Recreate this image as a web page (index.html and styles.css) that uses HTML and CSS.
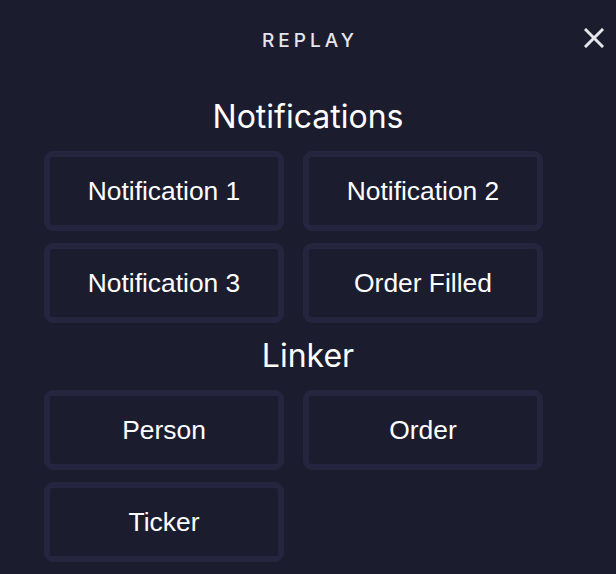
FILE: index.html
```html
<!DOCTYPE html>
<html>
<head>
<meta charset="utf-8">
<link rel="stylesheet" href="styles.css">
</head>
<body>
<div class="panel">
  <header class="topbar">
    <div class="brand">REPLAY</div>
    <button class="close" aria-label="Close">
      <svg width="20" height="20" viewBox="0 0 20 20"><path d="M2 2 L18 18 M18 2 L2 18" stroke="#e6e6ea" stroke-width="3" stroke-linecap="square" fill="none"/></svg>
    </button>
  </header>
  <h2 class="section-title">Notifications</h2>
  <div class="grid">
    <button class="tile">Notification 1</button>
    <button class="tile">Notification 2</button>
    <button class="tile">Notification 3</button>
    <button class="tile">Order Filled</button>
  </div>
  <h2 class="section-title">Linker</h2>
  <div class="grid">
    <button class="tile">Person</button>
    <button class="tile">Order</button>
    <button class="tile">Ticker</button>
  </div>
</div>
</body>
</html>
```
FILE: styles.css
```css
html, body {
  margin: 0;
  padding: 0;
  background: #1c1c2f;
  height: 100%;
  overflow: hidden;
}
.panel {
  display: flex;
  flex-direction: column;
}
.topbar {
  position: relative;
  height: 97px;
  display: flex;
  justify-content: center;
  align-items: flex-start;
}
.brand {
  margin-top: 29px;
  font-family: Inter, "Liberation Sans", sans-serif;
  font-size: 19px;
  font-weight: 500;
  letter-spacing: 4px;
  color: #e6e6ea;
  line-height: 24px;
  padding-left: 4px;
}
.close {
  position: absolute;
  right: 12px;
  top: 28px;
  width: 20px;
  height: 20px;
  padding: 0;
  border: 0;
  background: none;
  cursor: pointer;
}
.close svg { display: block; }
.section-title {
  margin: 0;
  text-align: center;
  font-family: Inter, "Liberation Sans", sans-serif;
  font-weight: 400;
  font-size: 32px;
  line-height: 40px;
  color: #ffffff;
  height: 40px;
}
.section-title + .grid { margin-top: 14px; }
.grid {
  display: grid;
  grid-template-columns: 240px 240px;
  column-gap: 19px;
  row-gap: 12px;
  padding-left: 44px;
  margin-bottom: 13px;
}
.tile {
  height: 80px;
  box-sizing: border-box;
  border: 6px solid #25253f;
  border-radius: 9px;
  background: #1c1c2f;
  color: #ffffff;
  font-family: "Liberation Sans", Arial, sans-serif;
  font-size: 26.4px;
  padding: 0;
  cursor: pointer;
}
```
